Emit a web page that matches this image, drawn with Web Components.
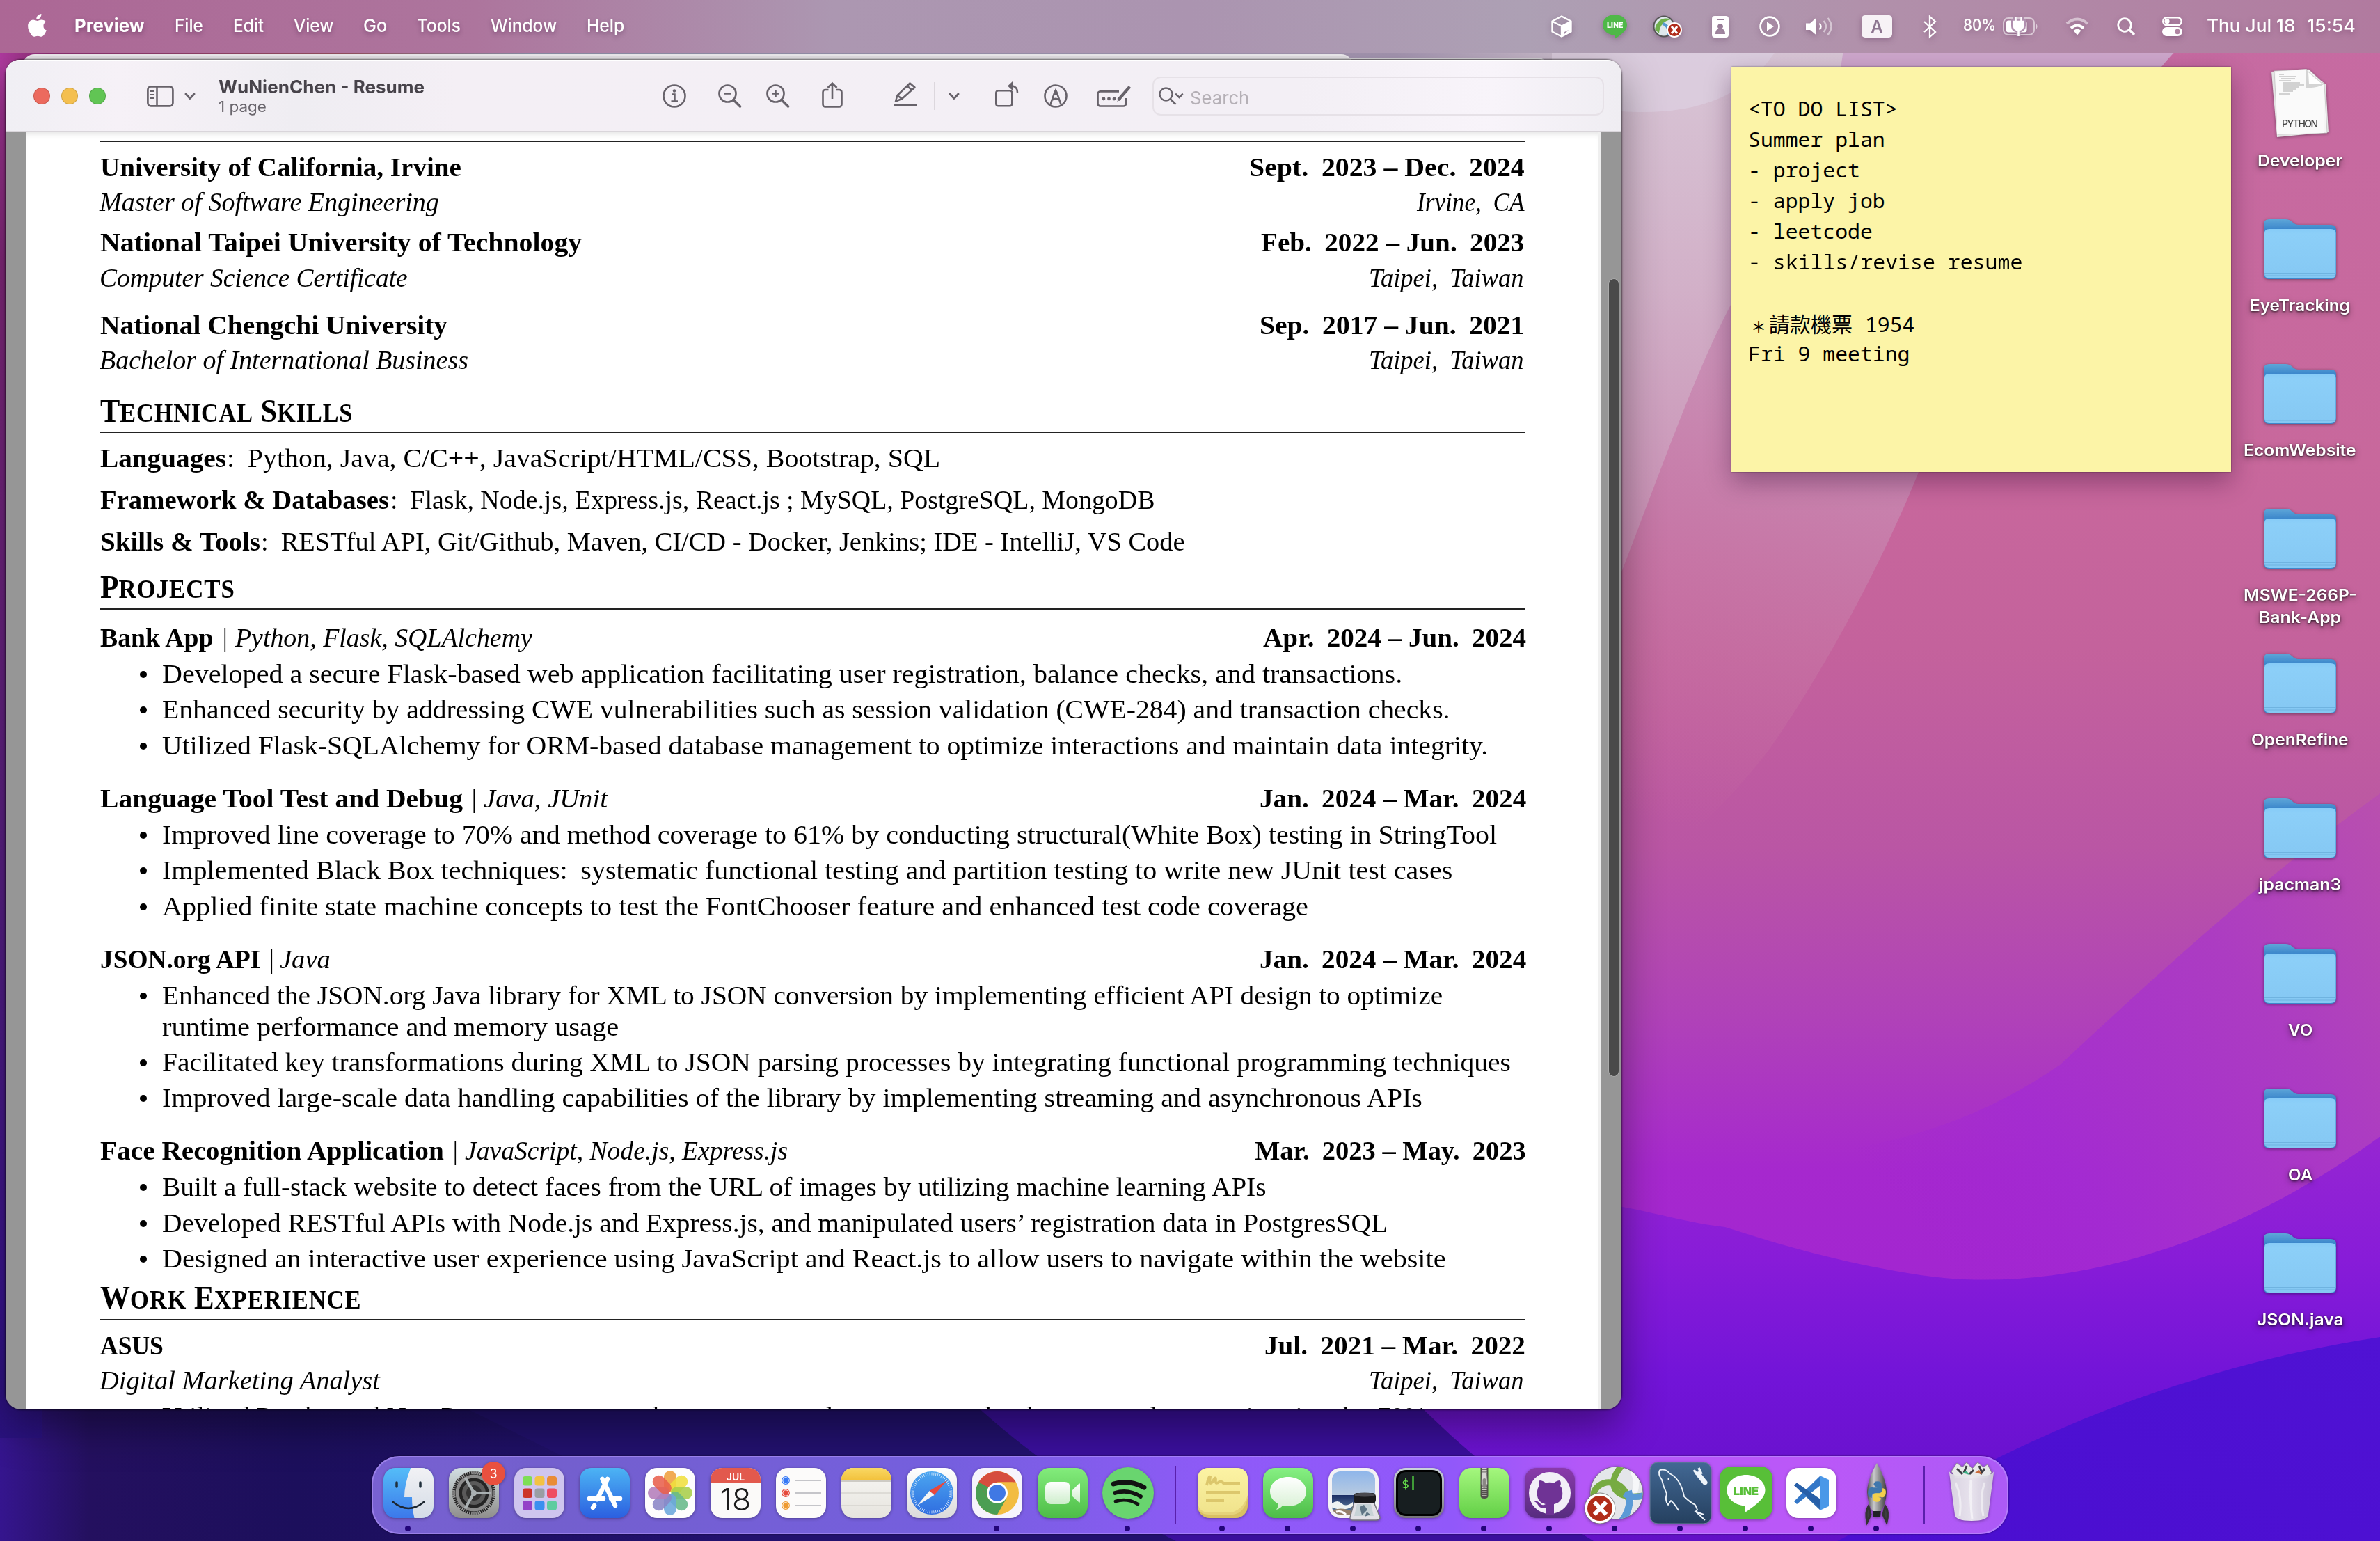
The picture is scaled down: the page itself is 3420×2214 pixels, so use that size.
<!DOCTYPE html>
<html lang="en">
<head>
<meta charset="utf-8">
<title>Desktop</title>
<style>
html,body{margin:0;padding:0;width:3420px;height:2214px;overflow:hidden;background:#2a1080}
</style>
</head>
<body>
<mac-desktop></mac-desktop>
<script>
const define=(name,html,setup)=>customElements.define(name,class extends HTMLElement{
  connectedCallback(){
    if(this.shadowRoot)return;
    this.attachShadow({mode:'open'}).innerHTML=typeof html==='function'?html(this):html;
    if(setup)setup(this);
  }
});

/* Text run stretched horizontally to a given advance width */
class FitText extends HTMLElement{
  connectedCallback(){
    if(!this.shadowRoot){
      this.attachShadow({mode:'open'}).innerHTML=`<style>:host{display:inline-block;white-space:pre}span{display:inline-block;transform-origin:0 50%;white-space:pre}</style><span><slot></slot></span>`;
    }
    this.fit();
    addEventListener('load',()=>this.fit());
  }
  fit(){
    const w=parseFloat(this.getAttribute('w'));
    this.style.width=w+'px';
    const s=this.shadowRoot.querySelector('span');
    const n=s.offsetWidth;
    if(n)s.style.transform=`scaleX(${w/n})`;
  }
}
customElements.define('fit-text',FitText);

define('mac-wallpaper',`<style>:host{display:block;width:3420px;height:2214px}svg{display:block}</style>
<svg width="3420" height="2214" viewBox="0 0 3420 2214">
<defs>
<linearGradient id="base" x1="0" y1="0" x2="0" y2="1"><stop offset="0" stop-color="#c66ba2"/><stop offset=".3" stop-color="#c8689c"/><stop offset=".42" stop-color="#c4629c"/><stop offset=".55" stop-color="#ba56a4"/><stop offset=".66" stop-color="#b042b8"/><stop offset=".76" stop-color="#a628ce"/><stop offset="1" stop-color="#9a20d6"/></linearGradient>
<linearGradient id="lt" x1="0" y1="0" x2="0" y2="1"><stop offset="0" stop-color="#d8c6d6"/><stop offset=".3" stop-color="#d2b0c8"/><stop offset=".6" stop-color="#c98fb4"/><stop offset="1" stop-color="#c470a2" stop-opacity="0"/></linearGradient>
<linearGradient id="md" gradientUnits="userSpaceOnUse" x1="2500" y1="60" x2="2250" y2="1150"><stop offset="0" stop-color="#cda6cb"/><stop offset=".4" stop-color="#c98fb5"/><stop offset=".62" stop-color="#c77ba9" stop-opacity=".9"/><stop offset="1" stop-color="#c66c9e" stop-opacity="0"/></linearGradient>
<linearGradient id="vi" gradientUnits="userSpaceOnUse" x1="3420" y1="1140" x2="2700" y2="1700"><stop offset="0" stop-color="#b950ae"/><stop offset=".35" stop-color="#ac3cc2"/><stop offset=".75" stop-color="#a32bd2" stop-opacity=".8"/><stop offset="1" stop-color="#a024d4" stop-opacity="0"/></linearGradient>
<linearGradient id="w1" x1="0" y1="0" x2="0" y2="1"><stop offset="0" stop-color="#9626d2"/><stop offset=".3" stop-color="#881cd8"/><stop offset=".6" stop-color="#7214d8"/><stop offset="1" stop-color="#6210c6"/></linearGradient>
<linearGradient id="w2" x1="1" y1="0" x2="0" y2="1"><stop offset="0" stop-color="#5012d4"/><stop offset="1" stop-color="#4a0ed0"/></linearGradient>
<linearGradient id="lf" x1="0" y1="0" x2="0" y2="1"><stop offset="0" stop-color="#b03aa0"/><stop offset=".15" stop-color="#86297e"/><stop offset=".6" stop-color="#5a2088"/><stop offset=".9" stop-color="#3a1492"/><stop offset="1" stop-color="#2a1280"/></linearGradient>
<linearGradient id="top" x1="0" y1="0" x2="1" y2="0"><stop offset="0" stop-color="#b03aa0"/><stop offset=".03" stop-color="#8c2f72"/><stop offset=".22" stop-color="#96505f"/><stop offset=".34" stop-color="#8e8fa8"/><stop offset=".9" stop-color="#a898b4"/><stop offset="1" stop-color="#cbbccd"/></linearGradient>
<linearGradient id="nv" x1="0" y1="0" x2="1" y2="0"><stop offset="0" stop-color="#35158e"/><stop offset=".12" stop-color="#24105f"/><stop offset=".4" stop-color="#1c0f5c"/><stop offset="1" stop-color="#22116e"/></linearGradient>
</defs>
<rect width="3420" height="2214" fill="url(#base)"/>
<path d="M2000 60H3140C3050 140 2900 420 2757 678C2719 774 2639 939 2540 1080C2460 1180 2380 1260 2200 1340Z" fill="url(#md)"/>
<path d="M2000 60H2650C2640 180 2560 340 2487 438C2437 534 2400 640 2330 822L2000 1250Z" fill="url(#lt)"/>
<path d="M2200 60H2560C2520 130 2450 168 2330 160L2200 150Z" fill="#dccfe0" opacity=".75"/>
<path d="M3420 1140C3240 1270 3100 1400 2960 1530C2800 1640 2600 1690 2330 1640V2214H3420Z" fill="url(#vi)"/>
<path d="M2200 1722C2330 1722 2400 1755 2479 1763C2563 1790 2650 1815 2760 1832C2950 1860 3190 1800 3420 1633V2214H1000V1722Z" fill="url(#w1)"/>
<path d="M3420 1921C3330 1935 3240 1955 3152 1983C3060 2010 2960 2050 2860 2100L2640 2214H3420Z" fill="url(#w2)"/>
<path d="M0 1980H2000C2070 2050 2150 2130 2290 2214H0Z" fill="#3a0f9c"/>
<path d="M0 1990H1370C1466 2080 1560 2150 1690 2214H0Z" fill="#22116e"/>
<path d="M0 1990H600C760 2066 900 2140 1060 2214H0Z" fill="url(#nv)"/>
<rect y="76" width="60" height="1990" fill="url(#lf)"/>
<rect y="76" width="2230" height="20" fill="url(#top)"/>
</svg>`);

/* Status icons: [width, height, markup] in screen pixels */
const ICONS={
apple:[27,33,`<path fill="#fff" d="M19.400 0c.3 2.200-.6 4.200-1.900 5.700-1.400 1.600-3.300 2.500-5.200 2.400-.3-2.100.7-4.200 1.900-5.500C15.500 1.100 17.700.1 19.400 0zM26 11.400c-2.200 1.300-3.700 3.300-3.600 6 .1 3.100 1.900 5.200 4.400 6.200-.8 2.300-1.900 4.500-3.400 6.500-1.200 1.600-2.500 2.700-4.200 2.700-1.800 0-2.500-1.100-5-1.100s-3.300 1.100-5 1.100c-1.800 0-3.100-1.300-4.400-3C1.900 26.100 0 21.700.1 17.300c.1-5.100 3.500-8.700 7.500-8.700 2.100 0 3.900 1.300 5.800 1.300 1.800 0 3.700-1.500 6.300-1.400 2.600.1 4.900 1.100 6.300 2.900z"/>`],
cube:[30,32,`<path d="M15 1.500L28.500 8.500V23.500L15 30.500L1.500 23.500V8.500Z" fill="none" stroke="#fff" stroke-width="2.400" stroke-linejoin="round"/><path d="M15 15.500L28.500 8.500V23.500L15 30.500Z" fill="#fff"/><path d="M2 9L15 15.500V30M15 15.500L28 9" stroke="#fff" stroke-width="2.400" fill="none"/><path d="M19 24l6-3-6 6z" fill="#a58fa8"/>`],
line:[35,34,`<path fill="#4fb848" d="M17.500 0C27.500 0 35 6.500 35 15c0 7-6 12-16 19-1.500.8-1.200-.5-1.200-4C7.500 29 0 23 0 15 0 6.500 7.500 0 17.500 0z"/><text x="17.500" y="18.500" font-family="Roboto" font-weight="900" font-size="11" text-anchor="middle" fill="#fff">LINE</text>`],
globe:[43,33,`<circle cx="16" cy="16" r="14.500" fill="#dfe8ec" stroke="#555" stroke-width="2"/><path d="M3 20C6 6 16 2 26 6C16 8 10 14 9 26Z" fill="#6fb04c"/><path d="M14 12C22 14 24 22 22 29" stroke="#5599d0" stroke-width="4" fill="none"/><circle cx="31" cy="21" r="11" fill="#fff"/><circle cx="31" cy="21" r="9" fill="#b02c1c"/><path d="M27 16l8 10M35 16l-8 10" stroke="#fff" stroke-width="3"/>`],
badge:[24,31,`<path fill="#fff" fill-rule="evenodd" d="M4 0H20a4 4 0 0 1 4 4V27a4 4 0 0 1-4 4H4a4 4 0 0 1-4-4V4a4 4 0 0 1 4-4zM7 4v2H17V4zM12 11a4 4 0 1 0 .01 0zM5 26c0-6 3-8 7-8s7 2 7 8z"/>`],
play:[30,30,`<circle cx="15" cy="15" r="13.400" fill="none" stroke="#fff" stroke-width="2.700"/><path d="M11 8.500L21 15L11 21.500Z" fill="#fff"/>`],
sound:[40,28,`<path fill="#fff" d="M0 9.500h6L15 1.500v25L6 19H0z"/><path d="M19.500 9.500q4 4.500 0 9" stroke="#fff" stroke-width="2.500" fill="none"/><path d="M25.500 6q7 8 0 16M31.500 2q10 12 0 24" stroke="#fff" stroke-opacity=".5" stroke-width="2.500" fill="none"/>`],
input:[44,32,`<rect width="44" height="32" rx="5" fill="#f7f2f6"/><text x="22" y="24.500" font-family="Inter" font-weight="600" font-size="24" text-anchor="middle" fill="#8d7590">A</text>`],
bt:[18,31,`<path d="M1 8L17 23L9 30V1L17 8L1 23" fill="none" stroke="#fff" stroke-width="2.300"/>`],
batt:[51,28,`<rect x="1" y="2" width="44" height="24" rx="7" fill="none" stroke="#fff" stroke-opacity=".55" stroke-width="2"/><rect x="4.500" y="5.500" width="30" height="17" rx="4" fill="#fff"/><path d="M48 10q3 4 0 8z" fill="#fff" fill-opacity=".6"/><path d="M18 0V7M27 0V7M15 7H30V13q0 6-7.500 6.500T15 13ZM22.500 19V28" stroke="#b08fae" stroke-width="6" fill="none"/><path d="M18.500 1V8M26.500 1V8M16 7H29V13q0 6-6.500 6T16 13ZM22.500 18V28" stroke="#fff" stroke-width="2.600" fill="#fff"/>`],
wifi:[34,26,`<path d="M2 9Q17-4 32 9" stroke="#fff" stroke-opacity=".5" stroke-width="4" fill="none"/><path d="M8 15.500Q17 7.500 26 15.500" stroke="#fff" stroke-width="4" fill="none"/><path d="M11.500 19Q17 14.500 22.500 19L17 25.500Z" fill="#fff"/>`],
mag:[26,26,`<circle cx="11" cy="11" r="9.300" fill="none" stroke="#fff" stroke-width="2.700"/><path d="M18 18L25 25" stroke="#fff" stroke-width="3.200"/>`],
ctl:[29,28,`<rect x="1.200" y="1.200" width="26.500" height="11" rx="5.500" fill="none" stroke="#fff" stroke-width="2.400"/><circle cx="7" cy="6.700" r="3.600" fill="#fff"/><rect x="0" y="15" width="29" height="13" rx="6.500" fill="#fff"/><circle cx="22" cy="21.500" r="3.800" fill="#b084a2"/>`],
side:[39,31,`<rect x="1.400" y="1.400" width="36" height="28" rx="4.500" fill="none" stroke="#67626a" stroke-width="2.700"/><path d="M14.500 2V29" stroke="#67626a" stroke-width="2.500"/><path d="M5 8h6M5 13h6M5 18h6" stroke="#67626a" stroke-width="2.200"/>`],
chev:[16,11,`<path d="M2 2L8 8.500L14 2" fill="none" stroke="#67626a" stroke-width="3" stroke-linecap="round" stroke-linejoin="round"/>`],
info:[34,34,`<circle cx="17" cy="17" r="15.500" fill="none" stroke="#67626a" stroke-width="2.600"/><circle cx="17" cy="9.500" r="2.200" fill="#67626a"/><path d="M13 14.500h4.500v9.500M12.500 24.500h9.500" stroke="#67626a" stroke-width="2.500" fill="none"/>`],
zout:[33,34,`<circle cx="13.500" cy="13.500" r="12" fill="none" stroke="#67626a" stroke-width="2.700"/><path d="M22 22.500L31.500 32" stroke="#67626a" stroke-width="3.600" stroke-linecap="round"/><path d="M8 13.500h11" stroke="#67626a" stroke-width="2.600"/>`],
zin:[33,34,`<circle cx="13.500" cy="13.500" r="12" fill="none" stroke="#67626a" stroke-width="2.700"/><path d="M22 22.500L31.500 32" stroke="#67626a" stroke-width="3.600" stroke-linecap="round"/><path d="M8 13.500h11M13.500 8v11" stroke="#67626a" stroke-width="2.600"/>`],
share:[30,38,`<path d="M9.500 12H5a3.500 3.500 0 0 0-3.500 3.500V33A3.500 3.500 0 0 0 5 36.500H25a3.500 3.500 0 0 0 3.500-3.500V15.500A3.500 3.500 0 0 0 25 12H20.500M15 25V2.500M8.500 9L15 2.500L21.500 9" fill="none" stroke="#67626a" stroke-width="2.600"/>`],
pen:[35,36,`<path d="M24.500 2.500L31.500 8.500L13 25L4 28.500L6.500 20ZM20.500 6.500L27.500 12.500M6.500 20L13 25" fill="none" stroke="#67626a" stroke-width="2.500" stroke-linejoin="round"/><path d="M1 34.500H34" stroke="#67626a" stroke-width="2.800"/>`],
rot:[34,37,`<rect x="1.300" y="13.300" width="23" height="22" rx="3" fill="none" stroke="#67626a" stroke-width="2.600"/><path d="M22 6.500Q32 6 32 16" fill="none" stroke="#67626a" stroke-width="2.500"/><path d="M25 0v13L18 6.500Z" fill="#67626a"/>`],
mark:[34,34,`<circle cx="17" cy="17" r="15.500" fill="none" stroke="#67626a" stroke-width="2.600"/><path d="M9.500 29L15.500 11.500L17 8.500L18.500 11.500L24.500 29M12.500 22.500Q17 19 21.500 22.500" fill="none" stroke="#67626a" stroke-width="2.500"/><path d="M14.500 15L17 8L19.500 15Z" fill="#67626a"/>`],
form:[51,32,`<path d="M32 9.300H5A3.500 3.500 0 0 0 1.500 13V27A3.500 3.500 0 0 0 5 30.500H38.500A3.500 3.500 0 0 0 42 27V19" fill="none" stroke="#67626a" stroke-width="2.700"/><path d="M47.500 2.500L31 21.500" stroke="#67626a" stroke-width="4.200"/><path d="M33 18L29 24L35 21Z" fill="#67626a"/><circle cx="10" cy="20" r="2.400" fill="#67626a"/><circle cx="17.500" cy="20" r="2.400" fill="#67626a"/><circle cx="25" cy="20" r="2.400" fill="#67626a"/>`],
smag:[36,26,`<circle cx="10.500" cy="10.500" r="9" fill="none" stroke="#67626a" stroke-width="2.300"/><path d="M17 17.500L24.500 25" stroke="#67626a" stroke-width="2.600"/><path d="M25 10.500L29.500 15L34 10.500" fill="none" stroke="#67626a" stroke-width="2.600" stroke-linecap="round"/>`]
};
define('ui-icon',el=>{const[w,h,m]=ICONS[el.getAttribute('name')];
return `<style>:host{display:block;flex:none;width:${w}px;height:${h}px}svg{display:block;overflow:visible}</style><svg width="${w}" height="${h}" viewBox="0 0 ${w} ${h}">${m}</svg>`});

const status=[['cube',0],['line',44],['globe',37],['badge',42],['play',44],['sound',37],['input',40],['bt',45]];
define('mac-menubar',`<style>
:host{display:flex;align-items:center;height:76px;box-sizing:border-box;padding:0 35px 0 40px;background:linear-gradient(90deg,#ac6795 0,#ad759d 20%,#ac97b1 35%,#ab94b0 50%,#ada0b4 64%,#b191ab 78%,#b17a9f 100%);color:#fff;font:500 26px/73px Inter,"Liberation Sans",sans-serif}
nav{display:flex;gap:43px;margin-left:40px;height:76px;text-shadow:0 3px 7px rgba(60,20,60,.4)}
b{font-weight:700}
.r{display:flex;align-items:center;margin-left:auto;filter:drop-shadow(0 3px 4px rgba(60,20,60,.3))}
.t{height:76px}
</style>
<ui-icon name="apple" style="margin-bottom:4px"></ui-icon>
<nav><b><fit-text w="101">Preview</fit-text></b><fit-text w="41">File</fit-text><fit-text w="44">Edit</fit-text><fit-text w="57">View</fit-text><fit-text w="34">Go</fit-text><fit-text w="63">Tools</fit-text><fit-text w="95">Window</fit-text><fit-text w="54">Help</fit-text></nav>
<div class="r">${status.map(([n,g])=>`<ui-icon name="${n}" style="margin-left:${g}px"></ui-icon>`).join('')}
<fit-text class="t" w="47" style="margin-left:39px;font-size:23px">80%</fit-text>
<ui-icon name="batt" style="margin-left:10px"></ui-icon><ui-icon name="wifi" style="margin-left:39px"></ui-icon><ui-icon name="mag" style="margin-left:40px"></ui-icon><ui-icon name="ctl" style="margin-left:39px"></ui-icon>
<fit-text class="t" w="127" style="margin-left:35px">Thu Jul 18</fit-text><fit-text class="t" w="70" style="margin-left:17px">15:54</fit-text></div>`);

/* Résumé rows: b = baseline on screen; l = left runs [kind,x,width,text]; r = right run [kind,x0,x1,text]; "~" marks a wide space */
const ROWS=[
{rule:202},
{b:253,l:[['b',144,519,'University of California, Irvine']],r:['b',1795,2191,'Sept.~2023 – Dec.~2024']},
{b:303,l:[['i',143,488,'Master of Software Engineering']],r:['i',2036,2190,'Irvine,~CA']},
{b:361,l:[['b',144,692,'National Taipei University of Technology']],r:['b',1812,2190,'Feb.~2022 – Jun.~2023']},
{b:412.5,l:[['i',143,443,'Computer Science Certificate']],r:['i',1967,2190,'Taipei,~Taiwan']},
{b:480,l:[['b',144,499,'National Chengchi University']],r:['b',1810,2190,'Sep.~2017 – Jun.~2021']},
{b:530,l:[['i',143,530,'Bachelor of International Business']],r:['i',1967,2190,'Taipei,~Taiwan']},
{b:606,rule:620,s:[363,'T<small>ECHNICAL</small> S<small>KILLS</small>']},
{b:671,l:[['b',144,181,'Languages'],['n',326,1025,':~Python, Java, C/C++, JavaScript/HTML/CSS, Bootstrap, SQL']]},
{b:731,l:[['b',144,415,'Framework &amp; Databases'],['n',561,1098,':~Flask, Node.js, Express.js, React.js ; MySQL, PostgreSQL, MongoDB']]},
{b:791.5,l:[['b',144,230,'Skills &amp; Tools'],['n',375,1328,':~RESTful API, Git/Github, Maven, CI/CD - Docker, Jenkins; IDE - IntelliJ, VS Code']]},
{b:858.5,rule:873.5,s:[194,'P<small>ROJECTS</small>']},
{b:929,l:[['b',144,163,'Bank App'],['n',320,7,'|'],['i',338,427,'Python, Flask, SQLAlchemy']],r:['b',1815,2193,'Apr.~2024 – Jun.~2024']},
{b:981,u:1782,t:'Developed a secure Flask-based web application facilitating user registration, balance checks, and transactions.'},
{b:1032,u:1851,t:'Enhanced security by addressing CWE vulnerabilities such as session validation (CWE-284) and transaction checks.'},
{b:1084,u:1905,t:'Utilized Flask-SQLAlchemy for ORM-based database management to optimize interactions and maintain data integrity.'},
{b:1160,l:[['b',144,521,'Language Tool Test and Debug'],['n',678,7,'|'],['i',695,178,'Java, JUnit']],r:['b',1810,2193,'Jan.~2024 – Mar.~2024']},
{b:1212,u:1918,t:'Improved line coverage to 70% and method coverage to 61% by conducting structural(White Box) testing in StringTool'},
{b:1263.5,u:1854,t:'Implemented Black Box techniques:~systematic functional testing and partition testing to write new JUnit test cases'},
{b:1315,u:1647,t:'Applied finite state machine concepts to test the FontChooser feature and enhanced test code coverage'},
{b:1391,l:[['b',144,230,'JSON.org API'],['n',387,7,'|'],['i',402,73,'Java']],r:['b',1810,2193,'Jan.~2024 – Mar.~2024']},
{b:1443,u:1840,t:'Enhanced the JSON.org Java library for XML to JSON conversion by implementing efficient API design to optimize'},
{b:1488,u:656,c:1,t:'runtime performance and memory usage'},
{b:1539,u:1938,t:'Facilitated key transformations during XML to JSON parsing processes by integrating functional programming techniques'},
{b:1590.5,u:1811,t:'Improved large-scale data handling capabilities of the library by implementing streaming and asynchronous APIs'},
{b:1666,l:[['b',144,494,'Face Recognition Application'],['n',651,7,'|'],['i',668,464,'JavaScript, Node.js, Express.js']],r:['b',1803,2193,'Mar.~2023 – May.~2023']},
{b:1718,u:1587,t:'Built a full-stack website to detect faces from the URL of images by utilizing machine learning APIs'},
{b:1770,u:1761,t:'Developed RESTful APIs with Node.js and Express.js, and manipulated users’ registration data in PostgresSQL'},
{b:1821,u:1844,t:'Designed an interactive user experience using JavaScript and React.js to allow users to navigate within the website'},
{b:1880,rule:1895,s:[375,'W<small>ORK</small> E<small>XPERIENCE</small>']},
{b:1946,l:[['b',144,91,'ASUS']],r:['b',1817,2192,'Jul.~2021 – Mar.~2022']},
{b:1996,l:[['i',143,403,'Digital Marketing Analyst']],r:['i',1967,2190,'Taipei,~Taiwan']},
{b:2048,u:1817,t:'Utilized Pandas and NumPy to process user data, generate sales reports, and reduce manual processing time by 70%'}
];
function resumeRows(){
  let cur=190,out='';
  const run=(k,w,t)=>`<fit-text class="${k}" w="${w}">${t.replace(/~/g,'<em> </em>')}</fit-text>`;
  for(const r of ROWS){
    if(!r.b){out+=`<div class="rule" style="height:${r.rule-cur}px"></div>`;cur=r.rule+2;continue}
    if(r.s){out+=`<h2 style="height:${r.b+10-cur}px;padding-bottom:${r.rule-r.b-10}px">${run('',r.s[0],r.s[1])}</h2>`;cur=r.rule+2;continue}
    const h=r.b+9.5-cur;cur+=h;
    let x=144,inner='';
    if(r.t){inner=`${r.c?'':'<i class="dot"></i>'}<span class="${r.c?'cont':'item'}">${run('n',r.u,r.t)}</span>`}
    else{for(const[k,at,w,t]of r.l){inner+=`<span style="margin-left:${at-x}px">${run(k,w,t)}</span>`;x=at+w}
      if(r.r)inner+=`<span style="margin-left:auto;margin-right:${2192-r.r[2]}px">${run(r.r[0],r.r[2]-r.r[1],r.r[3])}</span>`}
    out+=`<div class="row" style="height:${h}px">${inner}</div>`;
  }
  return out;
}
define('resume-page',()=>`<style>
:host{display:block;box-sizing:border-box;width:2263px;padding:0 104px 0 106px;background:#fff;color:#000;font:37.500px/44px "Bitstream Charter","Liberation Serif",serif;border-right:5px solid #efefef;box-shadow:inset 0 8px 8px -6px rgba(0,0,0,.12)}
.row{display:flex;align-items:flex-end;flex:none}
.row span{height:44px;flex:none}
em{word-spacing:.22em}
.b{font-weight:700}.i{font-style:italic}
.rule{border-bottom:2px solid #222}
h2{margin:0;font-size:46px;font-weight:700;line-height:44px;display:flex;align-items:flex-end;border-bottom:2px solid #222}
h2 small{font-size:37px;letter-spacing:1px}
.dot{width:10px;height:10px;border-radius:5px;background:#000;margin:0 0 17px 57px}
.item{margin-left:22px}.cont{margin-left:89px}
</style>${resumeRows()}`);

define('preview-window',`<style>
:host{display:block;width:2322px;height:1939px;border-radius:20px 20px 22px 22px;overflow:hidden;background:#969696}
header{display:flex;align-items:center;height:104px;box-sizing:border-box;border-bottom:2px solid #d9d5da;background:linear-gradient(90deg,#f0eff4 0,#f6f1f7 7%,#efedf2 18%,#f4eff5 28%,#f3eff5 80%,#f8f4fa 92%,#efedf2 100%);font-family:Inter,"Liberation Sans",sans-serif;box-shadow:inset 0 2px 0 #fff;padding:2px 0 0 40px}
.l{width:24px;height:24px;border-radius:50%;margin-right:16px;box-sizing:border-box;border:1px solid rgba(0,0,0,.15)}
.t{display:flex;flex-direction:column;margin-left:33px;width:400px}
.t1{font-weight:700;font-size:25px;line-height:30px;color:#47434a}.t2{font-size:21.500px;line-height:27px;color:#6a666d}
.sep{width:2px;height:40px;background:#dcd7dd}
.search{display:flex;align-items:center;box-sizing:border-box;width:649px;height:56px;border:2px solid #e6e1e7;border-radius:12px;padding-left:7px;margin-left:29px;font-size:26px;line-height:52px;color:#b5b0b6}
main{display:flex;height:1835px;overflow:hidden;padding-left:30px}
.bar{width:14px;height:1145px;border-radius:8px;background:#4a4a4a;border:1.500px solid #aaa;margin:210px 0 0 10px}
</style>
<header>
<div class="l" style="background:#ec6a5e"></div><div class="l" style="background:#f4bf4f"></div><div class="l" style="background:#61c554"></div>
<ui-icon name="side" style="margin-left:43px"></ui-icon><ui-icon name="chev" style="margin-left:15px"></ui-icon>
<div class="t"><fit-text class="t1" w="296">WuNienChen - Resume</fit-text><fit-text class="t2" w="69">1 page</fit-text></div>
<ui-icon name="info" style="margin-left:238px"></ui-icon><ui-icon name="zout" style="margin-left:46px"></ui-icon><ui-icon name="zin" style="margin-left:36px"></ui-icon><ui-icon name="share" style="margin-left:47px;margin-bottom:4px"></ui-icon>
<ui-icon name="pen" style="margin-left:72px;margin-bottom:6px"></ui-icon><div class="sep" style="margin-left:24px"></div><ui-icon name="chev" style="margin-left:19px"></ui-icon>
<ui-icon name="rot" style="margin-left:51px;margin-bottom:6px"></ui-icon><ui-icon name="mark" style="margin-left:36px"></ui-icon><ui-icon name="form" style="margin-left:42px"></ui-icon>
<div class="search"><ui-icon name="smag"></ui-icon><fit-text w="85" style="margin-left:9px;margin-top:5px">Search</fit-text></div>
</header>
<main><resume-page></resume-page><div class="bar"></div></main>`);

define('sticky-note',`<style>:host{display:block;box-sizing:border-box;width:718px;height:582px;background:#fcf4a7;padding:38px 0 0 24px;box-shadow:0 0 2px rgba(0,0,0,.5),0 14px 34px rgba(50,10,50,.4);color:#000;font:29.800px/44px "Noto Sans Mono","DejaVu Sans Mono","Noto Sans CJK TC",monospace}
div{height:44px;white-space:pre}.z{font-family:"Noto Sans CJK TC",sans-serif;font-size:30px}.z small{font-size:22px;font-weight:500;padding:0 4px;line-height:30px}</style>
<div><fit-text w="215">&lt;TO DO LIST&gt;</fit-text></div><div><fit-text w="197">Summer plan</fit-text></div><div><fit-text w="161">- project</fit-text></div><div><fit-text w="197">- apply job</fit-text></div><div><fit-text w="179">- leetcode</fit-text></div><div><fit-text w="394">- skills/revise resume</fit-text></div><div></div><div><span class="z"><small>＊</small>請款機票</span> 1954</div><div><fit-text w="232">Fri 9 meeting</fit-text></div>`);

const FOLDER=`<svg width="104" height="110" viewBox="0 -24 104 110"><defs><linearGradient id="f" x1="0" y1="0" x2="0" y2="1"><stop offset="0" stop-color="#86cbf7"/><stop offset=".1" stop-color="#8ccff8"/><stop offset="1" stop-color="#85c8f3"/></linearGradient><linearGradient id="g" x1="0" y1="0" x2="0" y2="1"><stop offset="0" stop-color="#5ea6d8"/><stop offset=".16" stop-color="#3d88cc"/></linearGradient></defs><path d="M0 7Q0 0 8 0H31Q37 0 41 4Q45 8 50 8H96Q104 8 104 15V78Q104 86 97 86H7Q0 86 0 78Z" fill="url(#g)"/><path d="M1 20Q1 14 8 14H96Q103.500 14 103.500 20V78Q103.500 85 96 85H8Q1 85 1 78Z" fill="url(#f)"/><path d="M1 77.500H103M2 81H102" stroke="#6fb3e0" stroke-width="1"/></svg>`;
const DOC=`<svg width="82" height="113" viewBox="0 -15 82 113"><path d="M0 4L50 0L78 22L82 91L8 98Z" fill="#e4e4e4"/><path d="M4 3L54 1L76 22L80 92L9 94Z" fill="#f6f6f6" stroke="#bbb" stroke-width=".7"/><path d="M6 4L50 1V26L75 23V92L8 94Z" fill="#fafafa"/><path d="M50 1L75 22Q66 28 50 27Z" fill="#d4d4d4"/><path d="M53 5L72 21L54 22Z" fill="#fff"/><path d="M11 8h7M11 11h24M14 14h20M11 17h17M17 20h24M17 23h30M17 26h22M17 29h18M17 32h14M11 36h16" stroke="#aaa" stroke-width="1.200"/><text x="41" y="84" font-family="Inter" font-weight="500" font-size="14" textLength="52" text-anchor="middle" fill="#444">PYTHON</text></svg>`;
define('desk-icon',el=>`<style>:host{display:flex;flex-direction:column;align-items:center;width:208px;height:208.100px;flex:none}
.p{display:flex;align-items:flex-end;height:131px;box-sizing:border-box;padding-bottom:${el.hasAttribute('doc')?18:22}px;filter:drop-shadow(0 1px 2px rgba(0,0,0,.4))}
svg{display:block}
.n{display:flex;flex-direction:column;align-items:center;color:#fff;font:600 23.500px/32px Inter,"Liberation Sans",sans-serif;text-shadow:0 1px 3px rgba(0,0,0,.75),0 3px 8px rgba(0,0,0,.5)}</style>
<div class="p">${el.hasAttribute('doc')?DOC:FOLDER}</div><div class="n"><slot></slot></div>`);

const sq=(f,e='')=>`<rect x="11" y="17" width="72" height="72" rx="17" fill="${f}" ${e}/>`;
const G=(id,a,b,c)=>`<linearGradient id="${id}" x1="0" y1="0" x2="0" y2="1"><stop offset="0" stop-color="${a}"/>${c?`<stop offset=".5" stop-color="${c}"/>`:''}<stop offset="1" stop-color="${b}"/></linearGradient>`;
const petals=['#ef9f3d','#f0df3e','#a8ce4a','#66b98a','#6ba7dc','#8a86c6','#b47dbb','#e8604c'].map((c,i)=>`<rect x="38" y="21" width="18" height="31" rx="9" fill="${c}" opacity=".88" transform="rotate(${i*45} 47 53)"/>`).join('');
const teeth=(r,n,len,c,w)=>Array.from({length:n},(_,i)=>`<path d="M47 ${53-r}v${len}" stroke="${c}" stroke-width="${w}" transform="rotate(${i*360/n} 47 53)"/>`).join('');
const padc=['#7ede56','#f3c243','#e98c38','#cc3329','#9a9ea3','#ee4d62','#9441c8','#3a8ff0','#5fcca0'];
const APPS={
finder:`<defs>${G('a','#54bdf8','#3c78ea')}${G('b','#f2f2f5','#d3dbe6')}<clipPath id="c"><rect x="11" y="17" width="72" height="72" rx="17"/></clipPath></defs><g clip-path="url(#c)"><rect x="11" y="17" width="72" height="72" fill="url(#a)"/><path d="M51 15Q41 40 41 59H52Q52 76 56 91H90V15Z" fill="url(#b)"/></g><path d="M30 38v6M64 38v6" stroke="#20303c" stroke-width="3.500" stroke-linecap="round"/><path d="M25 66Q47 84 69 66" fill="none" stroke="#1c2630" stroke-width="2.600" stroke-linecap="round"/>`,
settings:`<defs>${G('a','#d2dfe2','#8f8e8c')}</defs>${sq('url(#a)')}<circle cx="47" cy="53" r="31" fill="#242424"/>${teeth(31,60,4,'#aaa',1.3)}<circle cx="47" cy="53" r="24" fill="none" stroke="#8c8c8c" stroke-width="5"/><circle cx="47" cy="53" r="17" fill="#5a5a5a"/><circle cx="47" cy="53" r="11" fill="#333"/><path d="M47 53H72M47 53L34.500 31M47 53L34.500 75" stroke="#a9b0b2" stroke-width="4"/><circle cx="47" cy="53" r="4" fill="#a9b0b2"/><circle cx="75" cy="25" r="17" fill="#e9503f"/><text x="75" y="31.500" font-family="Inter" font-size="18" text-anchor="middle" fill="#fff">3</text>`,
launchpad:`${sq('#cfc5ee')}${padc.map((c,i)=>`<rect x="${23+(i%3)*17.500}" y="${29+Math.floor(i/3)*17.500}" width="14" height="13.500" rx="3.500" fill="${c}"/>`).join('')}`,
store:`<defs>${G('a','#4cb4f4','#2b5fe0')}</defs>${sq('url(#a)')}<path d="M43.500 33L62 71M51 33L36 62M25 61H45M56 61H69M32 71L30 74" stroke="#fff" stroke-width="6.500" stroke-linecap="round"/>`,
photos:`${sq('#fdfdfd')}<g style="isolation:isolate">${petals}</g><circle cx="47" cy="53" r="1.500" fill="#fff"/>`,
calendar:`<defs><clipPath id="c"><rect x="11" y="17" width="72" height="72" rx="17"/></clipPath></defs><g clip-path="url(#c)"><rect x="11" y="17" width="72" height="72" fill="#fbfaf9"/><rect x="11" y="17" width="72" height="22" fill="#e2594d"/></g><text x="47" y="34.500" font-family="Inter" font-weight="600" font-size="14" text-anchor="middle" fill="#fff">JUL</text><text x="47" y="78" font-family="Inter" font-weight="300" font-size="43" textLength="45" lengthAdjust="spacingAndGlyphs" text-anchor="middle" fill="#1c1c1c">18</text>`,
reminders:`${sq('#fcfbfa')}${[['#3478f6',35],['#e5493a',53],['#ee9a30',71]].map(([c,y])=>`<circle cx="25" cy="${y}" r="5.300" fill="#fff" stroke="${c}" stroke-width="1.200"/><circle cx="25" cy="${y}" r="3.700" fill="${c}"/><path d="M38 ${y}H76" stroke="#c5c5c9" stroke-width="1.800"/>`).join('')}`,
notes:`<defs>${G('a','#f9d864','#f2c13b')}${G('b','#f8f7f4','#e6e4de')}<clipPath id="c"><rect x="11" y="17" width="72" height="72" rx="17"/></clipPath></defs><g clip-path="url(#c)"><rect x="11" y="17" width="72" height="72" fill="url(#b)"/><rect x="11" y="17" width="72" height="18" fill="url(#a)"/><path d="M11 36H83" stroke="#a8a49a" stroke-width="1"/><path d="M13 38.500H83" stroke="#b5b1a8" stroke-width="1.200" stroke-dasharray="1.200 1.600"/><path d="M11 53H83M11 71H83" stroke="#ccc9c3" stroke-width="1.200"/></g>`,
safari:`<defs>${G('a','#fff','#dadada')}${G('b','#4ba6f0','#2f6de0')}</defs>${sq('url(#a)')}<circle cx="47" cy="53" r="31" fill="url(#b)"/>${teeth(29.500,60,4,'#dcecfb',.8)}<path d="M69 35L50.500 56L43.500 50Z" fill="#e8483c"/><path d="M26 71L43.500 50L50.500 56Z" fill="#f4f4f4"/>`,
chrome:`${sq('#f6f4fc')}<circle cx="47" cy="53" r="31" fill="#f2bc42"/><path d="M47 53L20.200 37.500A31 31 0 0 1 73.800 37.500H47Z" fill="#d64e3f"/><path d="M20.200 37.500A31 31 0 0 0 47 84L60.400 60.700L47 53Z" fill="#4b9e53"/><path d="M20.200 37.500L33.600 60.700L47 45L47 37.500Z" fill="#d64e3f"/><path d="M20.200 37.500L33.600 60.700L47 66L40 48Z" fill="#4b9e53"/><path d="M47 37.500H73.800L70 37.500L60.400 60.700L47 84L60.500 60.700L62 48Z" fill="#f2bc42"/><circle cx="47" cy="53" r="15" fill="#fff"/><circle cx="47" cy="53" r="12" fill="#4078e4"/>`,
facetime:`<defs>${G('a','#83ec7c','#4dbd47')}${G('b','#fff','#cdeecb')}</defs>${sq('url(#a)')}<rect x="22" y="37" width="36" height="32" rx="8" fill="url(#b)"/><path d="M60 50L70 40Q72 38 72 41V65Q72 68 70 66L60 57Z" fill="url(#b)"/>`,
spotify:`<circle cx="47" cy="53" r="37" fill="#69d56f"/><path d="M26 40Q48 33 70 45" stroke="#121212" stroke-width="7" stroke-linecap="round" fill="none"/><path d="M28 53Q47 47 65 58" stroke="#121212" stroke-width="5.800" stroke-linecap="round" fill="none"/><path d="M29 65Q46 60 61 69" stroke="#121212" stroke-width="4.800" stroke-linecap="round" fill="none"/>`,
stickies:`<defs>${G('a','#fcf3a4','#f0e38c')}</defs>${sq('#d9bf62')}<path d="M11 70V34Q11 17 28 17H66Q83 17 83 34V60Q78 82 62 84H28Q11 84 11 70Z" fill="#e6d27a"/><path d="M11 64V34Q11 17 28 17H66Q83 17 83 34V56Q76 78 58 81H28Q11 81 11 64Z" fill="url(#a)"/><path d="M24 42Q27 28 29 30Q27 44 33 36Q37 28 37 34Q36 42 42 37Q46 36 48 39H72M23 52H72M23 64H49" stroke="#dcc76c" stroke-width="3.800" fill="none"/>`,
messages:`<defs>${G('a','#86f083','#4dbd47')}${G('b','#fff','#d6f0d2')}</defs>${sq('url(#a)')}<path d="M47 30C62 30 73 39 73 51S62 72 47 72C44 72 41 71.500 39 71Q36 75 30 77Q33 73 33 68.500C25 65 21 58 21 51C21 39 32 30 47 30Z" fill="url(#b)"/>`,
preview:`<defs>${G('a','#8fb6ea','#b9cbe0')}${G('b','#1b2d63','#6f93ad')}<clipPath id="c"><rect x="16" y="22" width="62" height="62" rx="12"/></clipPath></defs>${sq('#f4f2f5')}<g clip-path="url(#c)"><rect x="16" y="22" width="62" height="35" fill="url(#a)"/><rect x="16" y="56" width="62" height="30" fill="url(#b)"/><path d="M16 68Q24 62 30 68T46 66V72Q34 80 16 74Z" fill="#eef2f2"/><path d="M16 78Q30 72 46 80V86H16Z" fill="#96806a"/><path d="M22 80Q30 78 36 84" stroke="#fff" stroke-width="3" fill="none"/></g><path d="M48 66H76L85 88Q85 92 79 92H47Q41 92 42 88Z" fill="#e2e0e6" stroke="#77757c" stroke-width="1.500"/><path d="M52 69H72L76 86H48Z" fill="#c7d2d6"/><path d="M56 73l6-3 5 7-8 8zM66 80l5 4-8 3z" fill="#5f7585"/><rect x="47" y="53" width="32" height="15" rx="5" fill="#1b1b1d"/><ellipse cx="63" cy="55.500" rx="15" ry="3" fill="#4b4b50"/>`,
terminal:`<defs>${G('a','#c9d2da','#76747a')}</defs>${sq('url(#a)')}<rect x="14" y="20" width="66" height="66" rx="14" fill="#000"/><rect x="17" y="23" width="60" height="60" rx="11" fill="#171e20"/><text x="22" y="46" font-family="DejaVu Sans Mono" font-size="18" fill="#66e04c">$</text><path d="M38.500 29v20" stroke="#3f9a37" stroke-width="3"/>`,
zip:`<defs>${G('a','#a5f77e','#62cf46')}</defs>${sq('url(#a)')}<path d="M41.500 17H52.500V57Q52.500 61 47 61T41.500 57Z" fill="#514f4b"/><path d="M47 17V59" stroke="#cfcdc8" stroke-width="7" stroke-dasharray="1.300 1.500"/><path d="M43.500 24H50.500L51.500 40Q47 46 42.500 40Z" fill="#d7d6d3" stroke="#666" stroke-width=".8"/><rect x="44.500" y="32" width="5" height="14" rx="2.500" fill="#8a8885"/>`,
github:`<defs>${G('a','#8a3aab','#572c7f')}</defs>${sq('url(#a)')}<circle cx="47" cy="53" r="30" fill="#f2eff7"/><path d="M41 84V74Q33 76 30 70Q28 66 24 65Q29 63 33 68Q36 72 41 69Q27 66 29 50Q29 46 32 43Q30 38 32.500 35Q37 35 41 38.500Q47 37 53 38.500Q57 35 61.500 35Q64 38 62 43Q65 46 65 50Q67 66 53 69V84Q47 86 41 84Z" fill="#6f3395"/>`,
rdp:`<defs><clipPath id="c"><circle cx="49" cy="53" r="37.500"/></clipPath></defs><circle cx="49" cy="53" r="38" fill="#e4e6ea" stroke="#6a6a78" stroke-width=".8"/><g clip-path="url(#c)" fill="none"><path d="M72 22Q84 42 68 66" stroke="#f6f7f9" stroke-width="8"/><path d="M14 62Q16 42 34 38Q58 36 66 62" stroke="#77ab42" stroke-width="9"/><path d="M58 12Q40 32 46 46Q54 62 88 57" stroke="#77ab42" stroke-width="9"/><path d="M60 54Q72 62 90 56" stroke="#5b9ad6" stroke-width="9"/><path d="M66 50Q72 74 56 94" stroke="#5b9ad6" stroke-width="10"/></g><circle cx="25" cy="75" r="22" fill="#fff" stroke="#666" stroke-width=".8"/><circle cx="25" cy="75" r="18" fill="#b12d19"/><path d="M17 66L34 84M34 66L17 84" stroke="#fff" stroke-width="6"/>`,
mysql:`<defs>${G('a','#426894','#25405f')}</defs><rect x="3" y="9" width="88" height="88" rx="11" fill="url(#a)" stroke="#6b7f9c" stroke-width="1"/><path d="M17 20Q26 18 31 25Q47 32 52 58Q60 66 68 70L71 77L69 80L82 92M80 84L67 79M17 20Q14 26 20 34Q22 44 27 54Q24 64 29 70L33 64Q38 68 44 78" fill="none" stroke="#eef4fa" stroke-width="1.900" stroke-linejoin="round"/><ellipse cx="29.500" cy="33" rx="1" ry="1.800" fill="#fff"/><path d="M66 20L72 28M73 17L77 26M69 27Q72 22 76 25" stroke="#eef4fa" stroke-width="3.500" fill="none"/><path d="M74 28L82 38" stroke="#eef4fa" stroke-width="7" stroke-linecap="round"/>`,
line:`<rect x="9" y="15" width="76" height="76" rx="17" fill="#58bf38"/><path d="M47 27C62 27 74.500 36 74.500 49C74.500 60 64 68 48 79.500Q45 81 46 77V71.500C30 70.500 19.500 61 19.500 49C19.500 36 32 27 47 27Z" fill="#fff"/><text x="47" y="56" font-family="Inter" font-weight="900" font-size="16" textLength="36" lengthAdjust="spacingAndGlyphs" text-anchor="middle" fill="#58bf38">LINE</text>`,
vscode:`${sq('#fff')}<path d="M22 42L26 38.500L62 66L60 78Z" fill="#2a66ad"/><path d="M22 65L26 69L60 42L60 28Z" fill="#3377c8"/><path d="M22 42L60 74V62L26 38.500Z" fill="#285fa8"/><path d="M59 28L72 34V72L59 78Z" fill="#4a98e8"/>`,
rocket:`<defs><linearGradient id="a"><stop offset="0" stop-color="#4c4c4e"/><stop offset=".35" stop-color="#c9c9cb"/><stop offset="1" stop-color="#3a3a3c"/></linearGradient></defs><path d="M35 72Q30 80 33 95L38 84ZM59 72Q65 80 61 95L56 84Z" fill="#3e3e42" stroke="#333" stroke-width="3"/><path d="M41 76H53L52 88H42Z" fill="#202024"/><path d="M47 10Q33 35 33 52Q34 70 41 79H53Q60 70 61 52Q61 35 47 10Z" fill="url(#a)"/><path d="M43 42Q43 37 48 37T53 42V49Q53 53 49 53H43Q39 53 39 59Q34 58 35 51T42 46H48" fill="#3f77ad" stroke="#3f77ad" stroke-width="1.500"/><path d="M52 60Q52 65 47 65T42 60V57Q42 54 46 54H51Q56 53 56 47Q60 48 59 54T53 58H47" fill="#f2cf4b" stroke="#f2cf4b" stroke-width="1.500"/>`,
trash:`<defs><linearGradient id="a"><stop offset="0" stop-color="#dcd8e2"/><stop offset=".5" stop-color="#eceaf0"/><stop offset="1" stop-color="#cfcad8"/></linearGradient></defs><path d="M18 22L26 10L34 16L40 9L48 18L56 9L64 16L70 12L76 24L70 32H24Z" fill="#e8e8ea" stroke="#888" stroke-width=".8"/><path d="M26 18l8 8M40 14l-4 10M58 14l4 10M66 18l-6 8M50 20l-6 6" stroke="#3b3b40" stroke-width="3"/><path d="M34 24l6-3 4 6z" fill="#3fae86"/><path d="M52 24l6-4 4 6z" fill="#c96b3a"/><path d="M14.500 20Q15 27 30 28.500Q47 30 64 28.500Q79 27 79.500 20L71 84Q70 93 47 93Q24 93 23 84Z" fill="url(#a)" opacity=".96"/><path d="M24 38Q34 60 30 86M66 38Q58 60 64 86M46 34Q44 60 48 90" stroke="#fff" stroke-width="3" fill="none" opacity=".5"/>`
};
define('dock-app',el=>`<style>:host{display:block;width:94px;height:112px;flex:none}svg{display:block;overflow:visible}g.s{filter:drop-shadow(0 1px 2px rgba(0,0,0,.35))}</style><svg width="94" height="112" viewBox="0 0 94 112"><g class="s">${APPS[el.getAttribute('name')]}</g>${el.hasAttribute('running')?'<circle cx="46" cy="104" r="4" fill="#230579"/>':''}</svg>`);
const app=n=>{const r=n.endsWith('*');return `<dock-app name="${n.replace('*','')}"${r?' running':''}></dock-app>`};
define('mac-dock',`<style>:host{display:flex;box-sizing:border-box;width:2352px;height:112px;padding-left:5.500px;border-radius:40px;background:linear-gradient(90deg,#7861d2 0,#735fcd 10%,#755fde 35%,#8f5af8 52%,#9158fa 66%,#b458f8 74%,#bb58f8 88%,#ac5af6 100%);box-shadow:inset 0 0 0 2px rgba(190,160,255,.5),0 0 3px rgba(0,0,0,.5)}
i{width:2px;height:84px;margin:14px 20px 0 20px;background:#5a20ac;flex:none}</style>
${['finder*','settings','launchpad','store','photos','calendar','reminders','notes','safari','chrome*','facetime','spotify*'].map(app).join('')}<i></i>${['stickies*','messages*','preview*','terminal*','zip*','github*','rdp*','mysql*','line*','vscode*','rocket*'].map(app).join('')}<i></i>${app('trash')}`);

define('mac-desktop',`<style>
:host{display:block;position:relative;width:3420px;height:2214px;overflow:hidden}
mac-wallpaper,mac-menubar,preview-window,sticky-note,mac-dock,.icons,.back,.sh{position:absolute}
mac-wallpaper{inset:0}
mac-menubar{left:0;top:0;width:3420px}
.back{background:#e8e5e9;border-top:2px solid #f4f2f5;box-sizing:border-box}
.sh{left:8px;top:86px;width:2322px;height:1939px;border-radius:22px;box-shadow:0 0 2px 1px rgba(0,0,0,.5),0 24px 60px rgba(0,0,0,.42)}
preview-window{left:8px;top:86px}
sticky-note{left:2488px;top:96px}
.icons{left:3201px;top:84px;display:flex;flex-direction:column}
mac-dock{left:534px;top:2092px}
</style>
<mac-wallpaper></mac-wallpaper>
<div class="back" style="left:1850px;top:83px;width:374px;height:60px;border-radius:14px;background:#bdb7bf"></div>
<div class="back" style="left:32px;top:78px;width:1913px;height:60px;border-radius:18px"></div>
<div class="sh"></div>
<preview-window></preview-window>
<sticky-note></sticky-note>
<div class="icons">
<desk-icon doc><fit-text w="122">Developer</fit-text></desk-icon>
<desk-icon><fit-text w="144">EyeTracking</fit-text></desk-icon>
<desk-icon><fit-text w="162">EcomWebsite</fit-text></desk-icon>
<desk-icon><fit-text w="163">MSWE-266P-</fit-text><fit-text w="118">Bank-App</fit-text></desk-icon>
<desk-icon><fit-text w="140">OpenRefine</fit-text></desk-icon>
<desk-icon><fit-text w="118">jpacman3</fit-text></desk-icon>
<desk-icon><fit-text w="35">VO</fit-text></desk-icon>
<desk-icon><fit-text w="35">OA</fit-text></desk-icon>
<desk-icon><fit-text w="125">JSON.java</fit-text></desk-icon>
</div>
<mac-dock></mac-dock>
<mac-menubar></mac-menubar>`);
</script>
</body>
</html>
